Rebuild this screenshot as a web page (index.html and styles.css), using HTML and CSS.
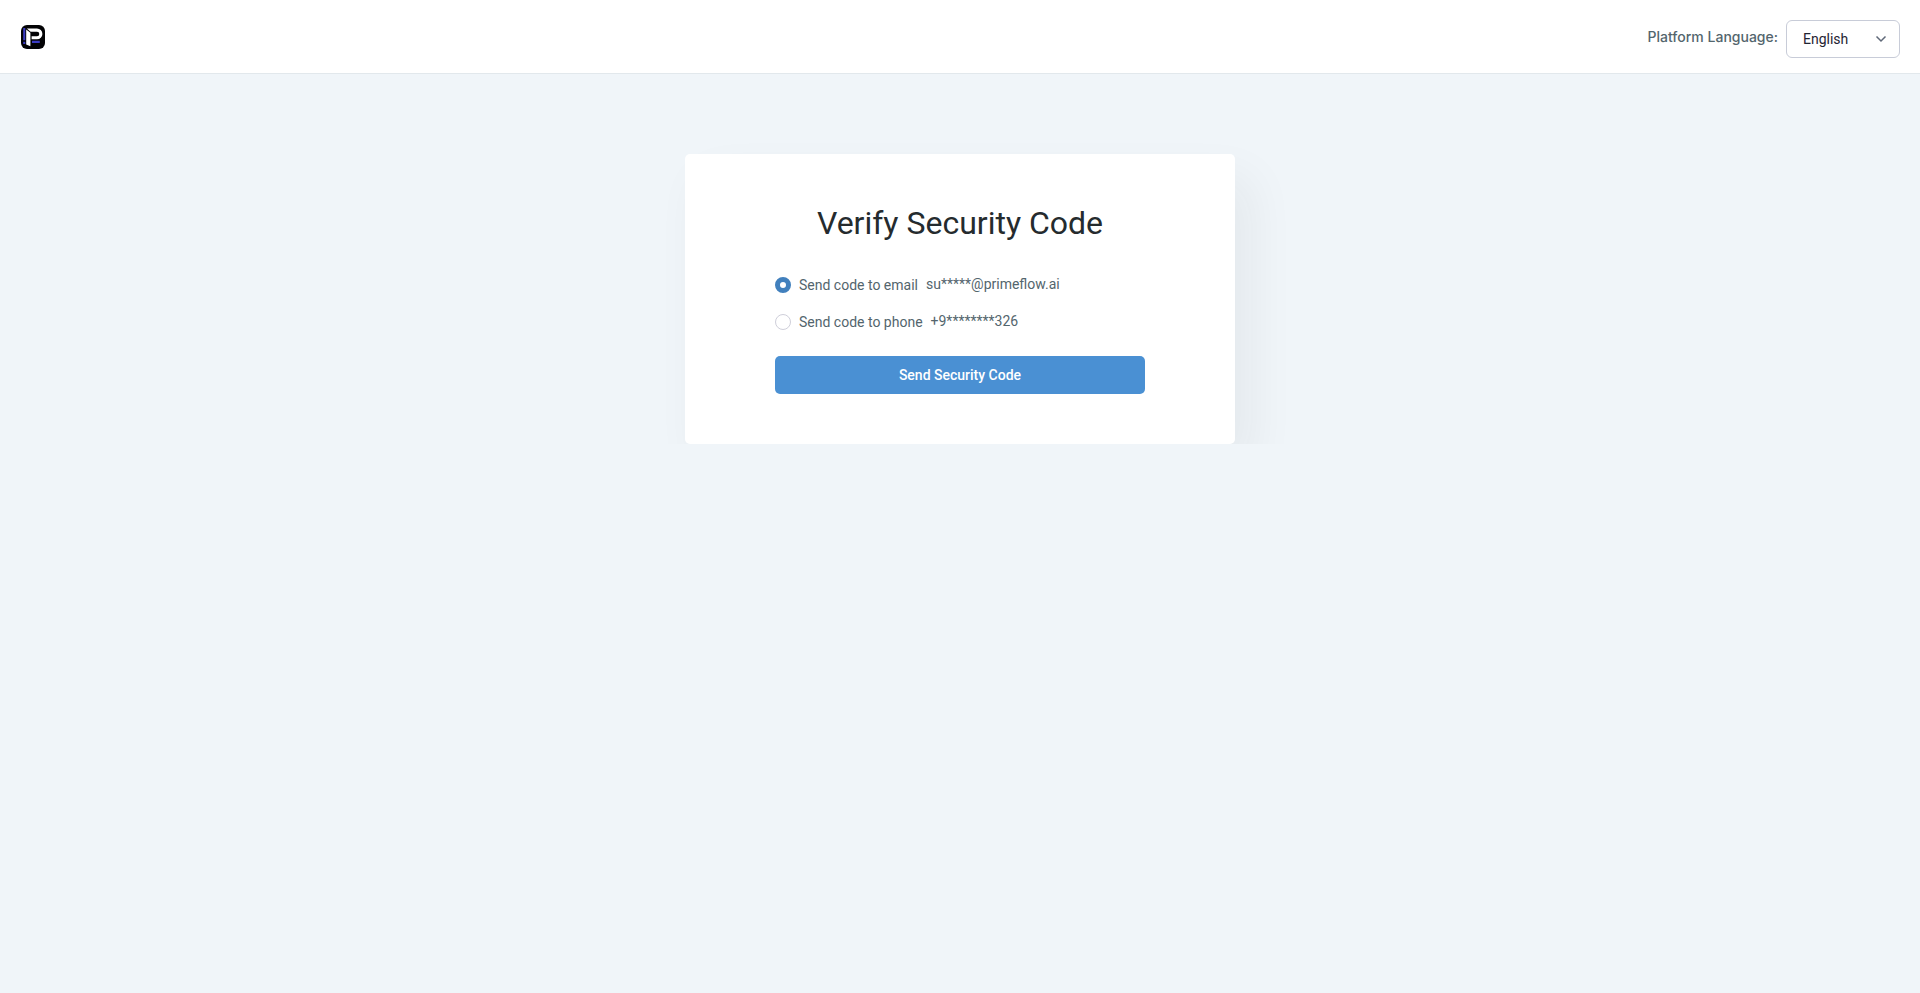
FILE: index.html
```html
<!DOCTYPE html>
<html lang="en">
<head>
    <meta charset="UTF-8">
    <meta name="viewport" content="width=device-width, initial-scale=1.0">
    <title>Verify Security Code</title>
    <link rel="stylesheet" href="styles.css">
</head>
<body>
    <header class="topbar">
        <a href="#" class="logo" aria-label="Home">
            <svg viewBox="0 0 24 24" width="24" height="24" aria-hidden="true">
                <rect width="24" height="24" rx="6" fill="#030305"/>
                <path d="M2.2 3h2.1v12.2H2.2zM2.2 16.8h2.1V19H2.2zM11 15.8h7.8V18H11z" fill="#3b3bc4"/>
                <path d="M5.2 4.4l4.2 3.4v13.4L5.2 19.6z" fill="#fff"/>
                <path d="M5.8 3.5H16a5.4 5.4 0 0 1 0 10.8h-5.4v-3H16a2.3 2.3 0 0 0 0-4.6H9.6z" fill="#fff"/>
            </svg>
        </a>
        <div class="language">
            <label for="language">Platform Language:</label>
            <select id="language">
                <option>English</option>
            </select>
        </div>
    </header>

    <main class="page">
        <section class="card">
            <h1>Verify Security Code</h1>
            <form>
                <div class="option">
                    <input type="radio" name="method" id="email" checked>
                    <label for="email">Send code to email</label>
                    <span class="contact">su*****@primeflow.ai</span>
                </div>
                <div class="option">
                    <input type="radio" name="method" id="phone">
                    <label for="phone">Send code to phone</label>
                    <span class="contact">+9********326</span>
                </div>
                <button type="button" class="send">Send Security Code</button>
            </form>
        </section>
    </main>
</body>
</html>
```
FILE: styles.css
```css
* {
    box-sizing: border-box;
}

body {
    margin: 0;
    min-height: 100vh;
    background-color: #f0f5f9;
    color: #53656d;
    font-family: Roboto, sans-serif;
    font-size: 14px;
    line-height: 20px;
}

.topbar {
    display: flex;
    justify-content: space-between;
    align-items: flex-start;
    padding: 20px 20px 15px;
    background-color: #fff;
    border-bottom: 1px solid #e2e8ec;
}

.logo {
    display: flex;
    padding: 5px 1px;
}

.language {
    display: flex;
    align-items: flex-start;
    gap: 8px;
}

.language label {
    padding-top: 7px;
    font-family: Inter, sans-serif;
    font-weight: 500;
}

.language select {
    width: 114px;
    height: 38px;
    padding: 0 16px;
    border: 1px solid #c8ccd8;
    border-radius: 6px;
    background: #fff url("data:image/svg+xml,%3Csvg xmlns='http://www.w3.org/2000/svg' width='12' height='8' fill='none' stroke='%235f6878' stroke-width='1.5'%3E%3Cpath d='M1.5 1.5L6 6l4.5-4.5'/%3E%3C/svg%3E") no-repeat right 12px center;
    color: #1f2433;
    font-family: inherit;
    font-size: 14px;
    appearance: none;
    cursor: pointer;
}

/* cuts the card shadow off at the bottom edge */
.page {
    padding-top: 80px;
    overflow: hidden;
}

.card {
    width: 100%;
    max-width: 550px;
    margin: 0 auto;
    padding: 49px 90px 50px;
    border-radius: 5px;
    background-color: #fff;
    box-shadow: 16px 24px 48px rgba(40, 40, 40, 0.06);
}

h1 {
    margin: 0 0 32px;
    color: #252b2e;
    font-size: 32px;
    font-weight: 400;
    line-height: 40px;
    text-align: center;
}

.option {
    display: flex;
    align-items: center;
    gap: 8px;
    margin-bottom: 17px;
}

.option input {
    width: 16px;
    height: 16px;
    margin: 0;
    border: 1px solid #cfcfda;
    border-radius: 50%;
    background-color: #fff;
    appearance: none;
}

.option input:checked {
    border: 5px solid #4180bd;
}

.contact {
    padding-bottom: 2px;
    line-height: 18px;
}

.send {
    width: 100%;
    height: 38px;
    margin-top: 7px;
    border: none;
    border-radius: 5px;
    background-color: #4a90d3;
    color: #fff;
    font-family: inherit;
    font-size: 14px;
    font-weight: 500;
    cursor: pointer;
}

.send:hover {
    background-color: #3f82c2;
}
```
